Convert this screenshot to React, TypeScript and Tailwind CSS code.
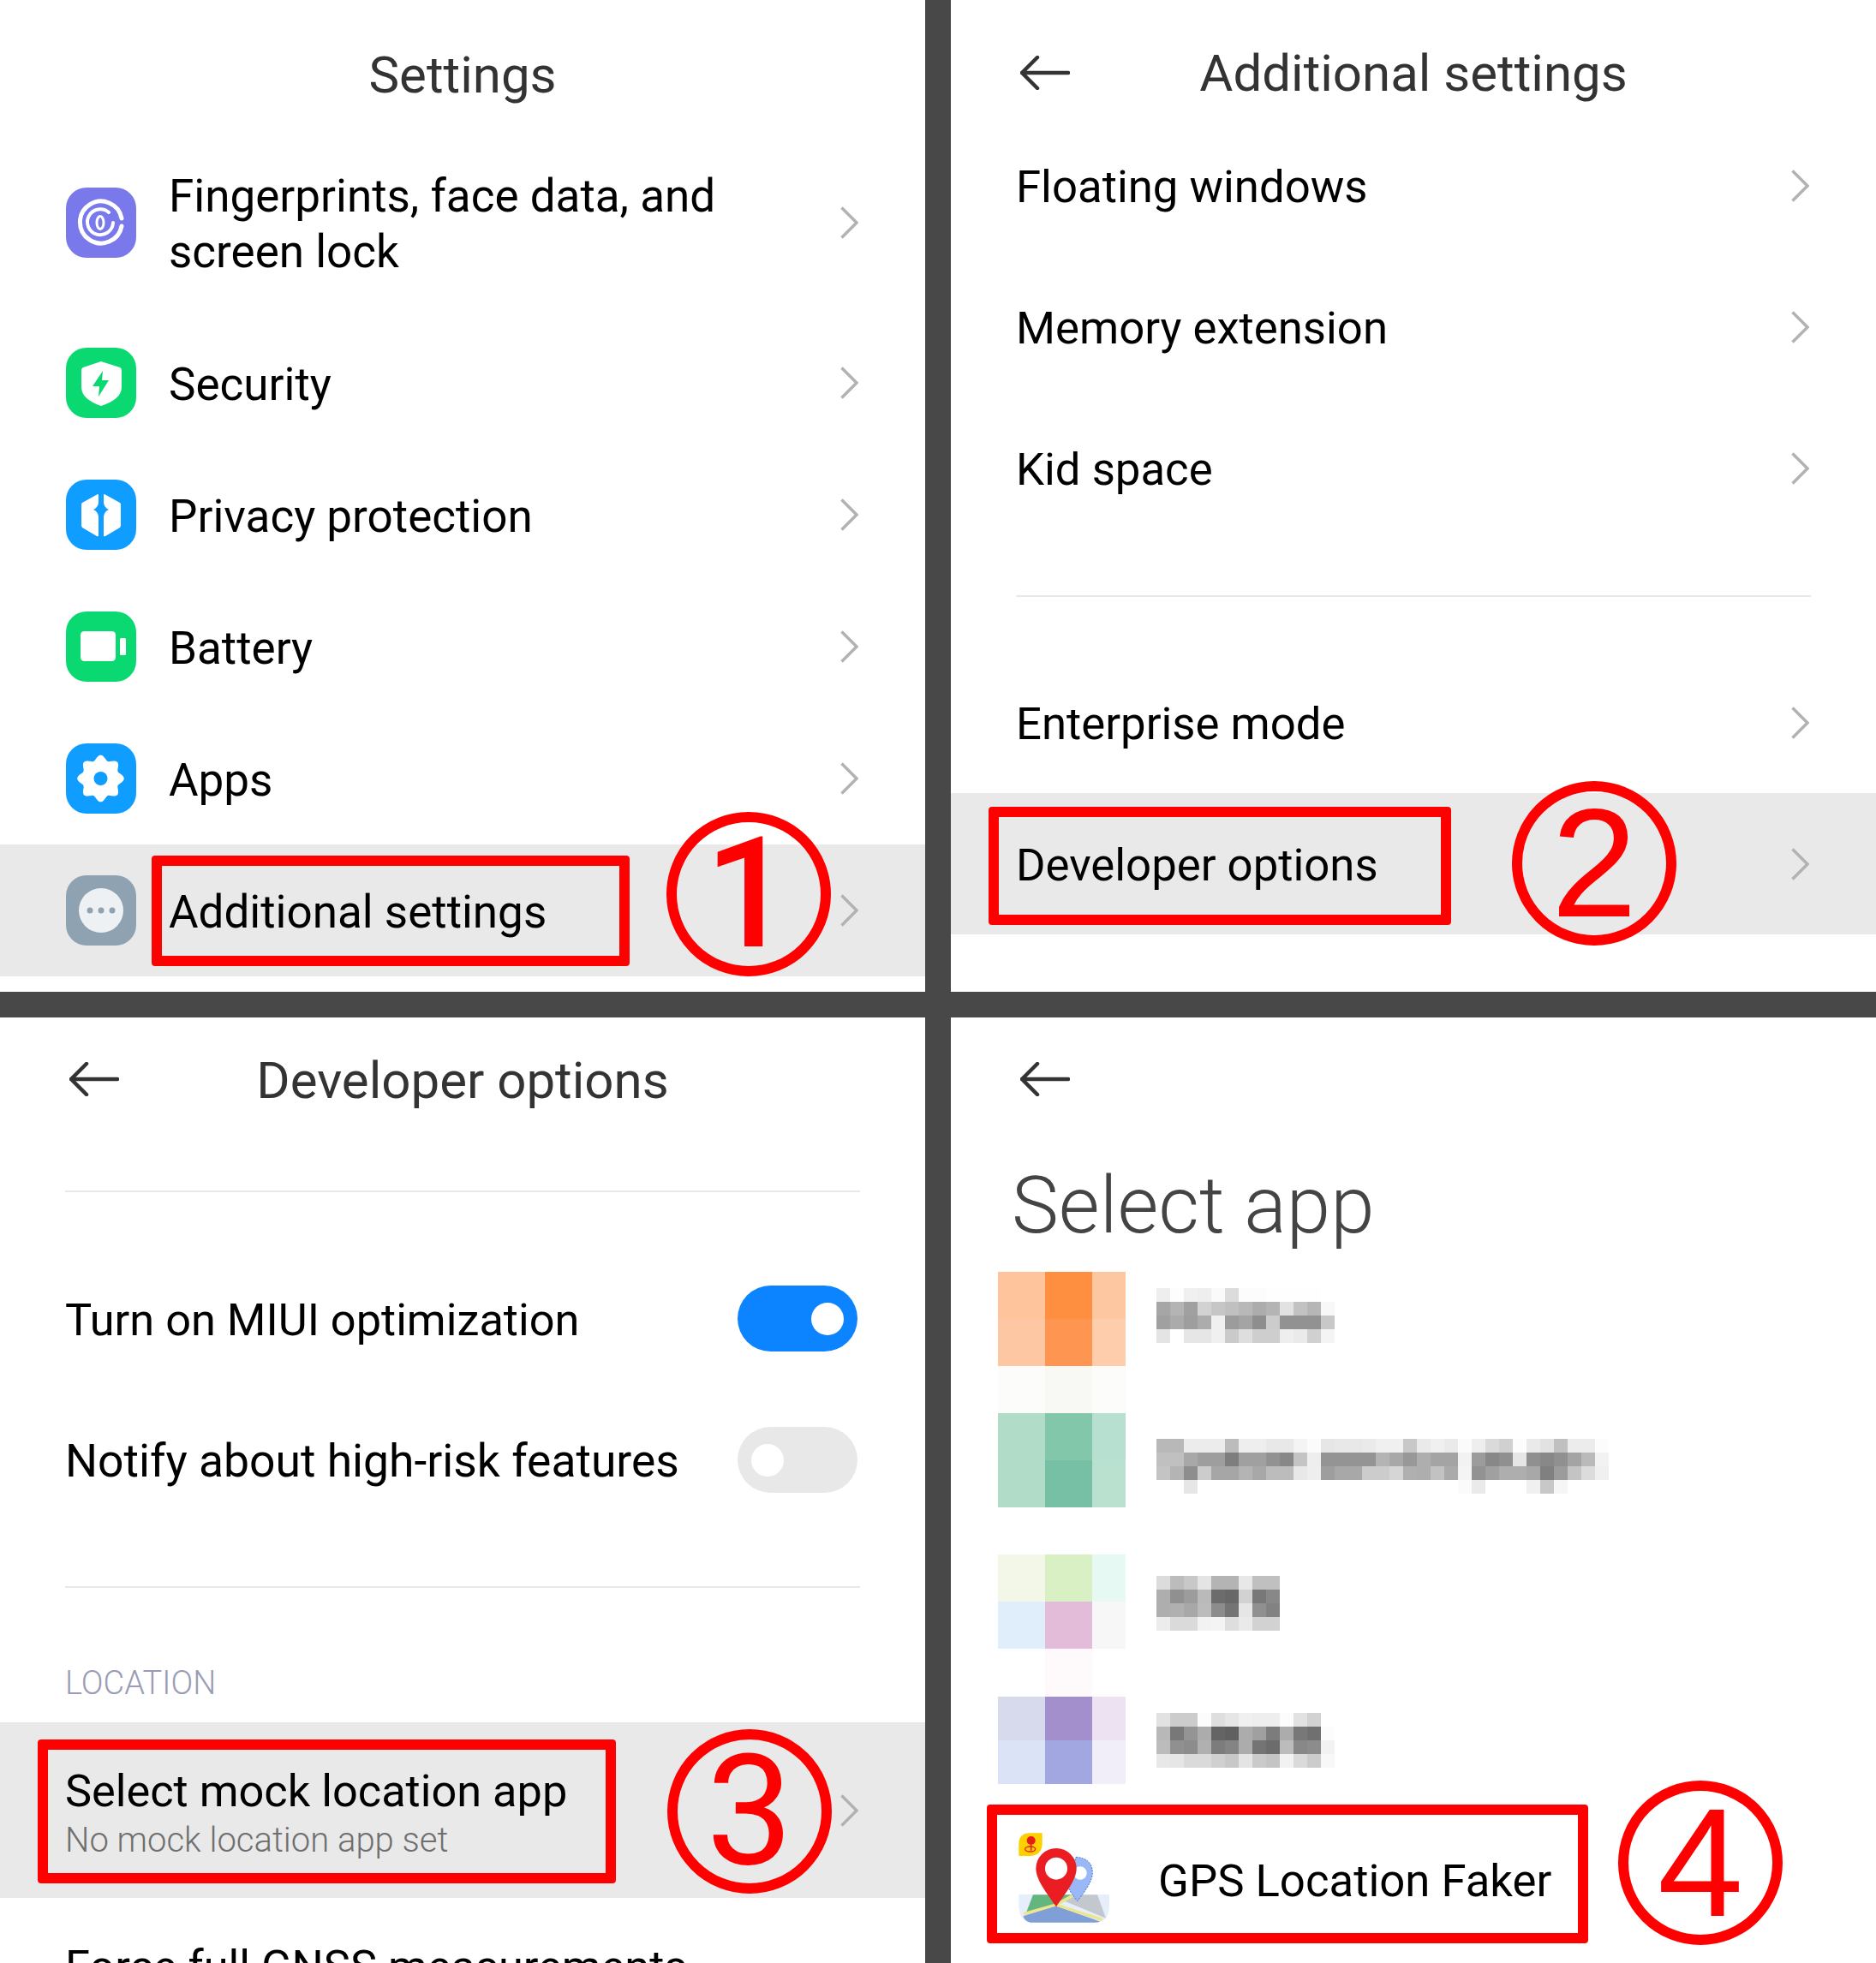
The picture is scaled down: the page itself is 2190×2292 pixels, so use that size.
import React from "react";

const Chevron = () => (
  <svg width="21" height="38" viewBox="0 0 21 38" className="shrink-0">
    <path d="M1.5 1.5 L19 19 L1.5 36.5" fill="none" stroke="#b2b2b2" strokeWidth="3.5" />
  </svg>
);

const BackArrow = () => (
  <svg width="58" height="40" viewBox="0 0 58 40" className="shrink-0">
    <path d="M20 2 L2 20 L20 38 M2 20 H56" fill="none" stroke="#333333" strokeWidth="4.5" strokeLinecap="round" strokeLinejoin="round" />
  </svg>
);

const Tile = ({ bg, children }: { bg: string; children: React.ReactNode }) => (
  <svg width="82" height="82" viewBox="0 0 82 82" className="shrink-0">
    <rect width="82" height="82" rx="24" fill={bg} />
    {children}
  </svg>
);

const gearPath = (() => {
  const pts: string[] = [];
  for (let i = 0; i < 160; i++) {
    const t = (i / 160) * Math.PI * 2;
    const r = 24.5 + 2.8 * Math.cos(8 * t);
    pts.push(`${(40.5 + r * Math.sin(t)).toFixed(2)} ${(41 - r * Math.cos(t)).toFixed(2)}`);
  }
  return "M" + pts.join("L") + "Z";
})();

const FingerIcon = () => (
  <Tile bg="#7a79ec">
    <path d="M65 36 A24.5 24.5 0 1 0 65 45" fill="none" stroke="#fff" strokeWidth="5" strokeLinecap="round" />
    <path d="M50 29 A15 15 0 1 0 55 41" fill="none" stroke="#fff" strokeWidth="4" strokeLinecap="round" />
    <ellipse cx="40" cy="41" rx="4" ry="7.5" fill="none" stroke="#fff" strokeWidth="3" />
  </Tile>
);
const ShieldIcon = () => (
  <Tile bg="#0ad972">
    <path d="M41 16 L63 23 Q65 24 65 26 V46 Q65 60 41 68 Q18 60 18 46 V26 Q18 24 20 23 Z" fill="#fff" />
    <path d="M43 27 L31 45 H39 L38 57 L50 38 H42 Z" fill="#0ad972" />
  </Tile>
);
const halfHex = "M37 17 Q38 17 38 18 V27 Q37 33 32 35 Q37 37 38 43 V65 Q38 67 36 66 L19 56 Q18 55 18 53 V29 Q18 28 19 27 Z";
const PrivacyIcon = () => (
  <Tile bg="#0f9dff">
    <path d={halfHex} fill="#fff" />
    <path d={halfHex} fill="#fff" transform="translate(82 0) scale(-1 1)" />
  </Tile>
);
const BatteryIcon = () => (
  <Tile bg="#0ad972">
    <rect x="17" y="23" width="41" height="35" rx="4.5" fill="#fff" />
    <rect x="63" y="31" width="7" height="20" rx="1.5" fill="#fff" />
  </Tile>
);
const AppsIcon = () => (
  <Tile bg="#0f9dff">
    <path d={gearPath} fill="#fff" />
    <circle cx="40.5" cy="41" r="8" fill="#0f9dff" />
  </Tile>
);
const MoreIcon = () => (
  <Tile bg="#8ea2b1">
    <circle cx="41" cy="41" r="26" fill="#eef1f3" />
    <circle cx="28" cy="41" r="3.5" fill="#8ea2b1" />
    <circle cx="41" cy="41" r="3.5" fill="#8ea2b1" />
    <circle cx="54" cy="41" r="3.5" fill="#8ea2b1" />
  </Tile>
);

const Row = ({ children, active, h = "h-[165px]", pl = "pl-[76px]" }: { children: React.ReactNode; active?: boolean; h?: string; pl?: string }) => (
  <div className={`flex items-center pr-[78px] ${pl} ${h} ${active ? "bg-[#e9e9e9]" : ""}`}>
    {children}
    <div className="ml-auto">
      <Chevron />
    </div>
  </div>
);

const first = "ml-[38px] translate-y-[2px] text-[53px] leading-[65px] text-black";

const IconRow = ({ icon, label, active }: { icon: React.ReactNode; label: string; active?: boolean }) => (
  <Row h="h-[154px]" pl="pl-[77px]" active={active}>
    {icon}
    <span className={first}>{label}</span>
  </Row>
);

const Divider = () => <div className="mx-[76px] h-[2px] bg-[#e8e8e8]" />;

const RedBox = ({ className }: { className: string }) => (
  <div className={`absolute border-[12px] border-[#ff0000] rounded-[4px] ${className}`} />
);

const Badge = ({ n, className }: { n: string; className: string }) => (
  <div className={`absolute flex h-[192px] w-[192px] items-center justify-center rounded-full border-[12px] border-[#ff0000] leading-none text-[#ff0000] ${className}`}>
    {n}
  </div>
);

const Toggle = ({ on }: { on?: boolean }) => (
  <div className={`flex h-[77px] w-[140px] -translate-y-px items-center rounded-full ${on ? "justify-end bg-[#0d84ff] pr-[16px]" : "bg-[#e8e8e8] pl-[16px]"}`}>
    <div className="h-[38px] w-[38px] rounded-full bg-white" />
  </div>
);

const Mosaic = ({ rows, cols, cell, cellH }: { rows: string[][]; cols?: number[]; cell?: number; cellH?: number }) => {
  const widths = cols ?? rows[0].map(() => cell ?? 16);
  const h = cellH ?? 16;
  const w = widths.reduce((a, b) => a + b, 0);
  return (
    <svg width={w} height={rows.length * h} className="shrink-0" shapeRendering="crispEdges">
      {rows.map((r, y) => {
        let x = 0;
        return r.map((c, i) => {
          const el = <rect key={i} x={x} y={y * h} width={widths[i]} height={h} fill={`#${c}`} />;
          x += widths[i];
          return el;
        });
      })}
    </svg>
  );
};

const g = (s: string) => s.split(" ").map((v) => (v.length === 2 ? v + v + v : v));

const iconCols = [55, 55, 39];

const t1 = [
  "ee fd f0 ee fa dc fc fc fe fe fe fe ff",
  "a6 b4 a0 d2 c6 c0 b8 ac b4 e2 c2 b6 f8",
  "a0 ab 9e ac f0 9c a4 8e cc 92 92 92 c8",
  "e4 ff e6 e6 f0 ca de ce ce ee ea d0 f4",
].map(g);
const t2 = [
  "b8 b8 ec ec ec bc ee ee e8 e8 f4 fb e6 e8 e8 ea f0 f0 c8 ea f0 ea fb ee da d0 fc ea e2 c0 ec ec fc",
  "c0 c0 a8 9e 9e 7e a0 a0 92 88 c4 ee 94 94 94 94 b4 a8 98 ae a4 a4 f2 9c 88 90 e6 90 88 90 a4 ba f2",
  "c4 b4 8e cc a6 a6 b4 a8 bc bc e8 ee 9e a8 a8 cc cc d6 b0 ae c2 aa f4 92 a0 ae ae a8 80 9c c4 dc f0",
  "ff ff e6 ff ff ff ff ff ff ff ff ff ff ff ff ff ff ff ff ff ff ff fb ea ff ff ff f0 c8 f6 ff ff ff",
].map(g);
const t3 = [
  "dc bc c8 e4 b4 b4 e8 c0 c0",
  "ae 90 9c ba 6c 68 d2 78 88",
  "ae b0 a8 bc 8c 74 e6 90 82",
  "ec da da f2 f4 de ea d2 d2",
].map(g);
const t4 = [
  "e2 cc cc fc de e6 f0 ee ee fc e2 d2 ff",
  "b8 78 94 ac 64 60 ac a0 7c ac 78 70 fc",
  "bc 90 8c b0 7c 84 ac 74 6c bc 88 8c f2",
  "e8 e6 da da d0 c8 e4 ca c4 f2 da cc f8",
].map(g);

const GpsIcon = () => (
  <svg width="114" height="110" viewBox="110 180 342 330" className="shrink-0">
    <path d="M120 402 H437 V440 Q437 498 390 500 H170 Q120 498 120 440 Z" fill="#e6edfb" />
    <path d="M170 403 H310 L250 438 L145 468 Z" fill="#62b67e" />
    <path d="M310 403 H395 L425 485 L280 425 Z" fill="#c3c8cf" />
    <path d="M135 478 L250 442 L405 497 Q395 500 385 500 H160 Q142 498 135 478 Z" fill="#7f9fd6" />
    <path d="M138 470 L250 438 L412 490 M250 438 L310 405" fill="none" stroke="#ede58a" strokeWidth="10" />
    <path d="M320 271 Q378 275 378 327 Q378 360 325 425 Q300 395 290 370 Z" fill="#9ab8f5" stroke="#3d6fdd" strokeWidth="3" strokeDasharray="6 4" />
    <circle cx="335" cy="327" r="23" fill="#fff" />
    <path d="M251 240 A71 71 0 0 1 322 311 C322 350 285 395 251 445 C217 395 180 350 180 311 A71 71 0 0 1 251 240 Z" fill="#ea1d22" />
    <circle cx="251" cy="311" r="39" fill="#fff" />
    <path d="M120 267 V225 Q120 187 160 187 H202 V225 Q200 265 160 267 Z" fill="#fdd000" />
    <circle cx="163" cy="213" r="15" fill="#e81c1c" />
    <path d="M163 228 V248" stroke="#e81c1c" strokeWidth="5" />
    <ellipse cx="160" cy="243" rx="18" ry="9" fill="none" stroke="#e81c1c" strokeWidth="4" />
  </svg>
);

const title = "text-[60px] leading-[60px] text-[#333333]";
const second = "translate-y-px text-[52.7px] leading-[66px] text-black";
const item = "text-[52.3px] leading-[66px] text-black";

export default function App() {
  return (
    <div className="flex h-[2292px] w-[2190px] flex-col gap-[30px] overflow-hidden bg-[#484848] [font-family:Roboto,sans-serif]">
      <div className="flex h-[1158px] gap-[30px]">
        {/* Panel 1 */}
        <div className="relative w-[1080px] overflow-hidden bg-white">
          <div className={`h-[150px] pt-[58px] text-center ${title}`}>Settings</div>
          <Row h="h-[220px]" pl="pl-[77px]">
            <FingerIcon />
            <span className={first}>
              Fingerprints, face data, and
              <br />
              screen lock
            </span>
          </Row>
          <IconRow icon={<ShieldIcon />} label="Security" />
          <IconRow icon={<PrivacyIcon />} label="Privacy protection" />
          <IconRow icon={<BatteryIcon />} label="Battery" />
          <IconRow icon={<AppsIcon />} label="Apps" />
          <IconRow icon={<MoreIcon />} label="Additional settings" active />
          <RedBox className="left-[177px] top-[999px] h-[129px] w-[558px]" />
          <Badge n="1" className="left-[778px] top-[948px] text-[180px] font-medium" />
        </div>
        {/* Panel 2 */}
        <div className="relative w-[1080px] overflow-hidden bg-white">
          <div className="flex h-[134px] items-start px-[81px] pt-[65px]">
            <BackArrow />
            <div className={`-mt-[9px] flex-1 pr-[58px] text-center ${title}`}>Additional settings</div>
          </div>
          <Row><span className={second}>Floating windows</span></Row>
          <Row><span className={second}>Memory extension</span></Row>
          <Row><span className={second}>Kid space</span></Row>
          <div className="h-[66px]" />
          <Divider />
          <div className="h-[64px]" />
          <Row><span className={second}>Enterprise mode</span></Row>
          <Row active><span className={second}>Developer options</span></Row>
          <RedBox className="left-[44px] top-[942px] h-[138px] w-[540px]" />
          <Badge n="2" className="left-[655px] top-[912px] text-[180px] [font-family:'Liberation_Sans',sans-serif]" />
        </div>
      </div>
      <div className="flex h-[1104px] gap-[30px]">
        {/* Panel 3 */}
        <div className="relative w-[1080px] overflow-hidden bg-white">
          <div className="flex h-[202px] items-start px-[81px] pt-[52px]">
            <BackArrow />
            <div className={`-mt-[8px] flex-1 pr-[58px] text-center ${title}`}>Developer options</div>
          </div>
          <Divider />
          <div className="h-[66px]" />
          <div className="flex h-[165px] items-center justify-between pl-[76px] pr-[79px]">
            <span className={item}>Turn on MIUI optimization</span>
            <Toggle on />
          </div>
          <div className="flex h-[165px] items-center justify-between pl-[76px] pr-[79px]">
            <span className="text-[53.4px] leading-[66px] text-black">Notify about high-risk features</span>
            <Toggle />
          </div>
          <div className="h-[64px]" />
          <Divider />
          <div className="flex h-[157px] items-center pl-[76px] pt-[65px] text-[38px] font-light text-[#9a9cb5]">LOCATION</div>
          <Row h="h-[205px]" active>
            <div className="pt-[3px]">
              <div className={item}>Select mock location app</div>
              <div className="mt-[2px] text-[40px] font-light leading-[46px] text-[#6f6f6f]">No mock location app set</div>
            </div>
          </Row>
          <div className={`pl-[76px] pt-[47px] ${item}`}>Force full GNSS measurements</div>
          <RedBox className="left-[44px] top-[843px] h-[168px] w-[675px]" />
          <Badge n="3" className="left-[779px] top-[831px] text-[180px]" />
        </div>
        {/* Panel 4 */}
        <div className="relative w-[1080px] overflow-hidden bg-white">
          <div className="h-[164px] px-[81px] pt-[52px]">
            <BackArrow />
          </div>
          <div className="h-[133px] pl-[71px] text-[92.5px] font-light leading-[112px] text-[#444444]">Select app</div>
          <div className="flex h-[165px] items-start gap-[36px] pl-[55px]">
            <Mosaic cols={iconCols} cellH={55} rows={[["fec49b", "fe8f41", "fdc7a1"], ["fec7a3", "fe9550", "fecdab"], ["fcfcfa", "f8f8f4", "fcfcfb"]]} />
            <div className="pt-[19px]"><Mosaic rows={t1} /></div>
          </div>
          <div className="flex h-[165px] items-start gap-[36px] pl-[55px]">
            <Mosaic cols={iconCols} cellH={55} rows={[["b0dcc8", "83c7ab", "b8e0d0"], ["b0dcc8", "78c0a5", "bae0d0"]]} />
            <div className="pt-[30px]"><Mosaic rows={t2} /></div>
          </div>
          <div className="flex h-[166px] items-start gap-[36px] pl-[55px]">
            <Mosaic cols={iconCols} cellH={55} rows={[["f3f7e8", "d9f0c4", "e6f9f2"], ["e0eefc", "e3bcd9", "f8f7f8"], ["ffffff", "fef9fb", "ffffff"]]} />
            <div className="pt-[25px]"><Mosaic rows={t3} /></div>
          </div>
          <div className="flex h-[120px] items-start gap-[36px] pl-[55px]">
            <Mosaic cols={iconCols} cellH={51} rows={[["d7daec", "a38fcb", "ece2f2"], ["dbe3f6", "a2a7e2", "f1edf9"]]} />
            <div className="pt-[19px]"><Mosaic rows={t4} /></div>
          </div>
          <div className="flex items-center pl-[76px] pt-[37px]">
            <GpsIcon />
            <span className="ml-[52px] translate-y-[3px] text-[52.7px] leading-[66px] text-black">GPS Location Faker</span>
          </div>
          <RedBox className="left-[42px] top-[919px] h-[162px] w-[702px]" />
          <Badge n="4" className="left-[779px] top-[891px] text-[180px] [font-family:'Liberation_Sans',sans-serif]" />
        </div>
      </div>
    </div>
  );
}
